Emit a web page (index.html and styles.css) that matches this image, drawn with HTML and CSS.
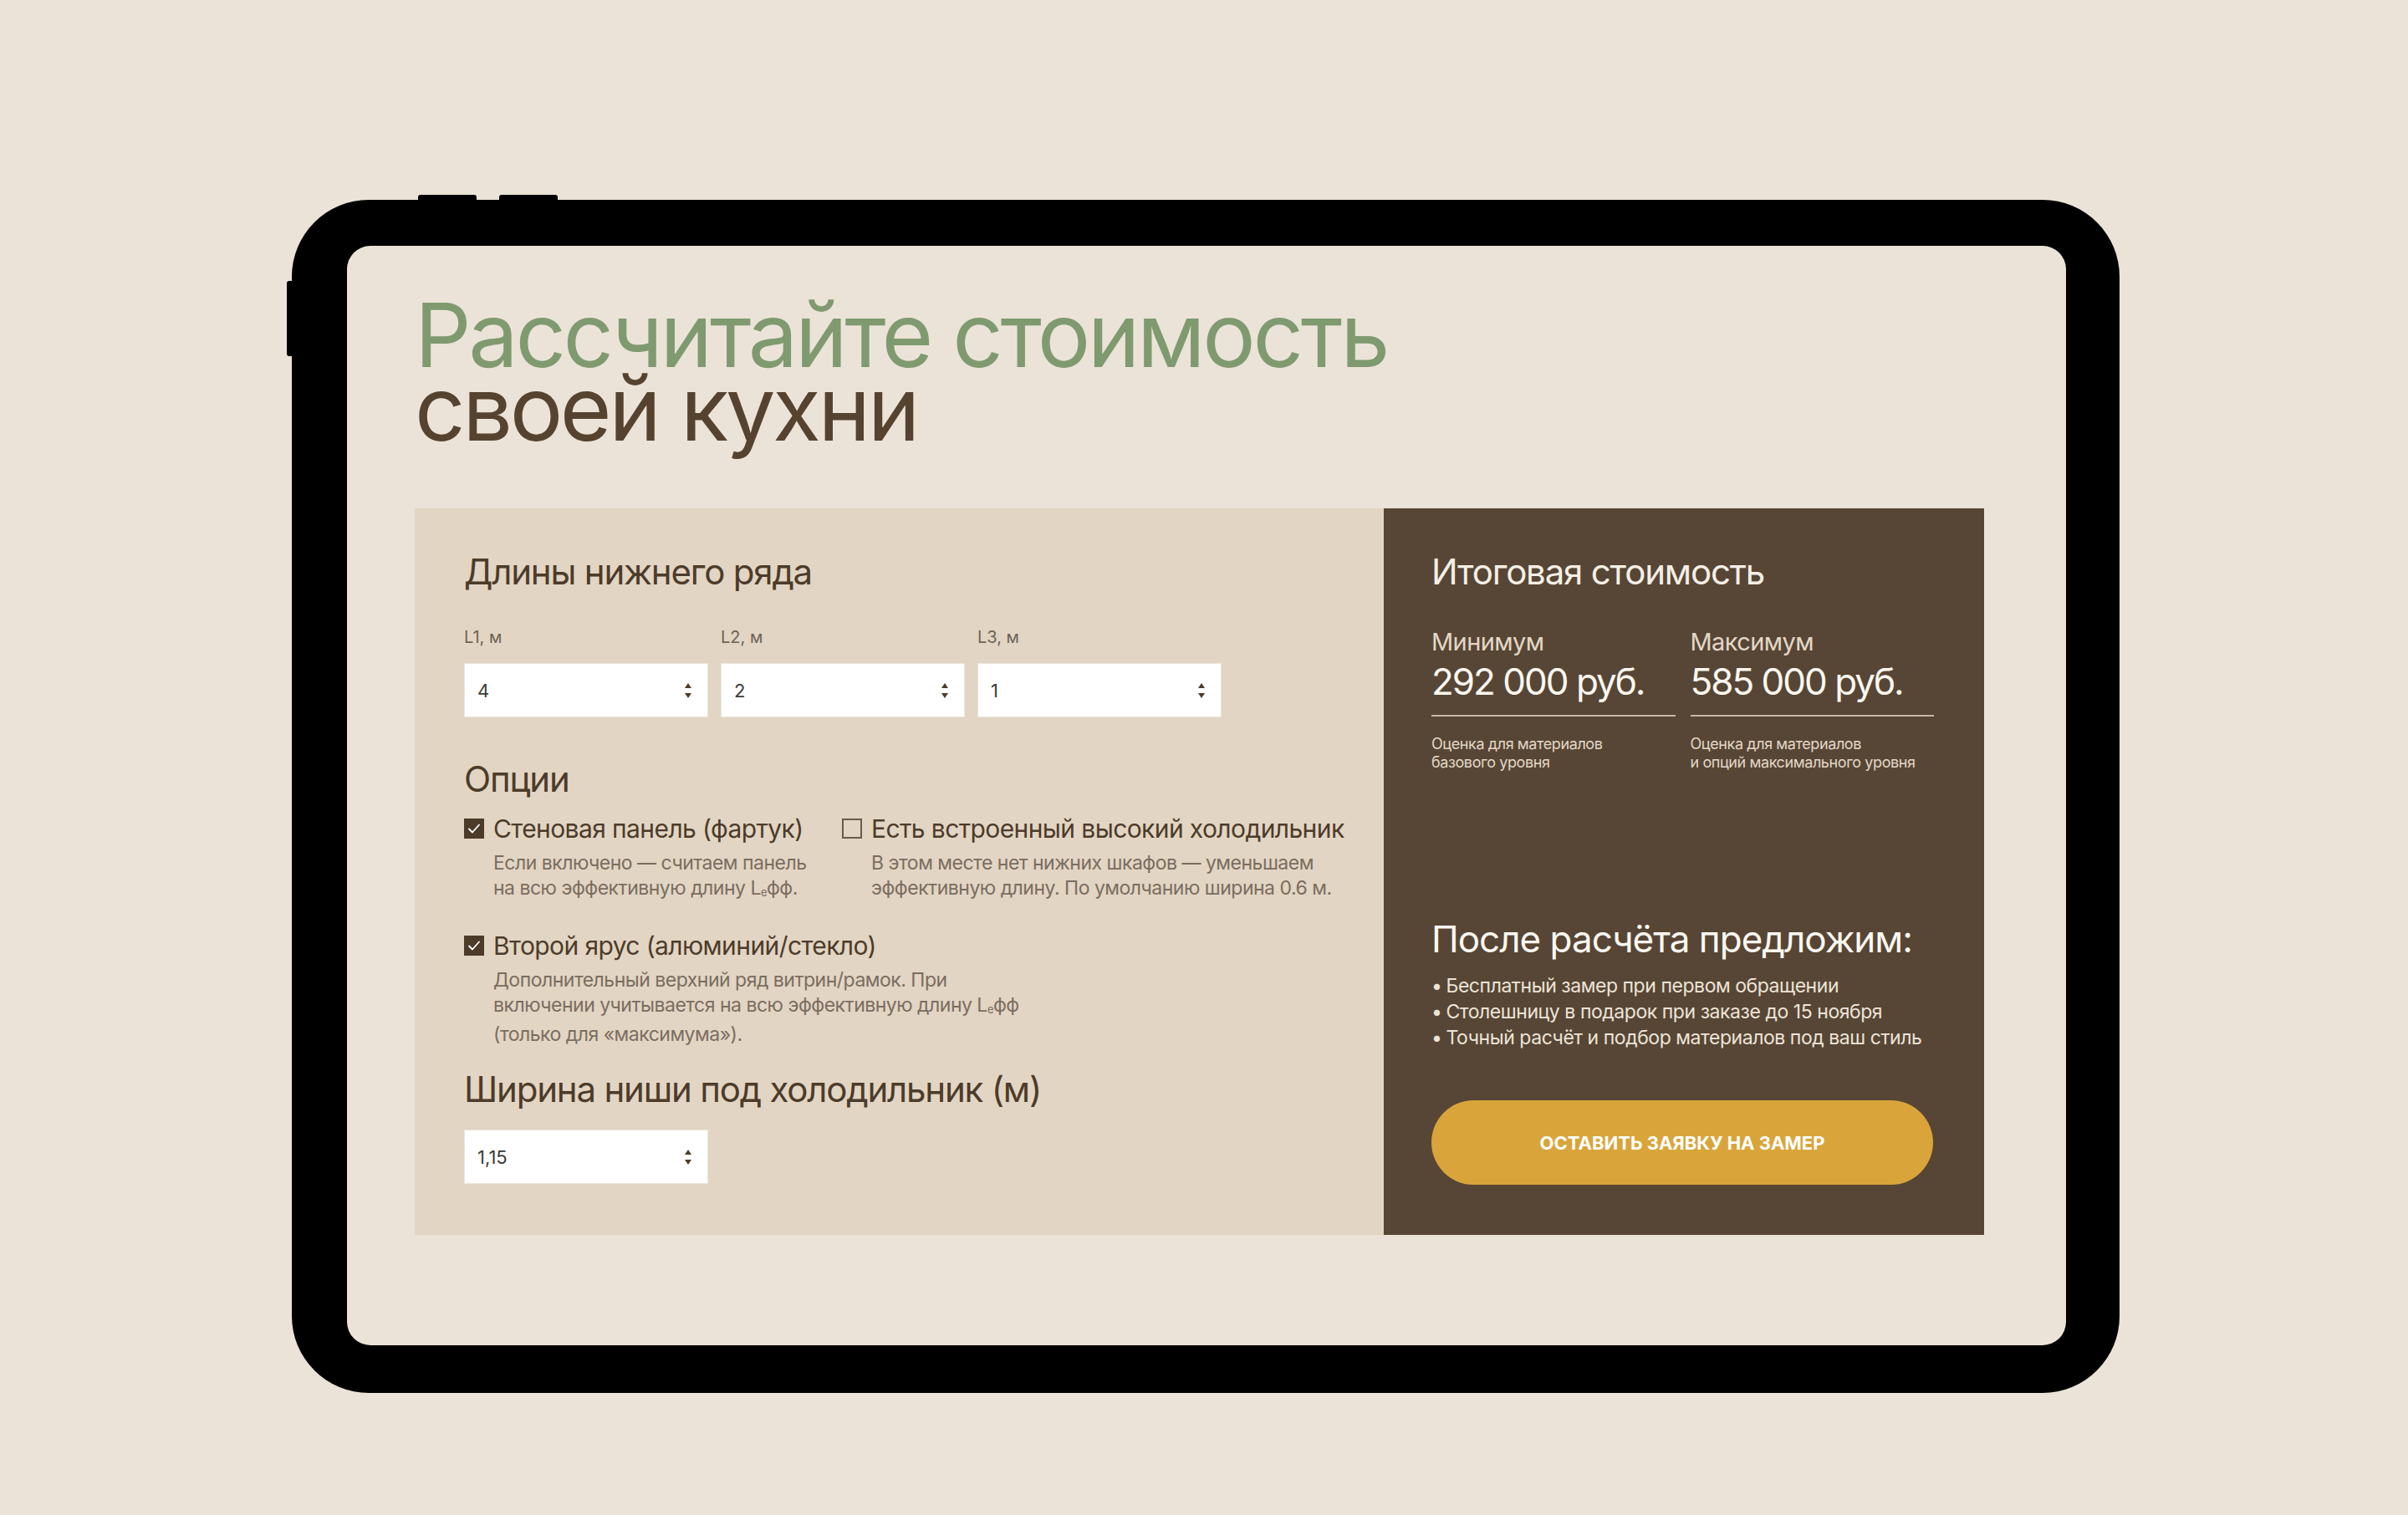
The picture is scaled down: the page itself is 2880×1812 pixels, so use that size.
FILE: index.html
```html
<!DOCTYPE html>
<html lang="ru">
<head>
<meta charset="utf-8">
<title>Калькулятор кухни</title>
<link rel="stylesheet" href="styles.css">
</head>
<body>
<div class="stage">
  <div class="tablet">
    <span class="btn-top btn-top-1"></span>
    <span class="btn-top btn-top-2"></span>
    <span class="btn-side"></span>
    <div class="screen">
      <h1 class="title"><span class="title-green">Рассчитайте стоимость</span><br><span class="title-brown">своей кухни</span></h1>
      <div class="calc">
        <div class="calc-left">
          <h2 class="sec-title">Длины нижнего ряда</h2>
          <div class="lengths">
            <div class="field">
              <div class="field-label">L1, м</div>
              <div class="num-input"><span class="num-val">4</span><svg class="spin" viewBox="0 0 8 18" width="8" height="18"><path d="M4 0 L8 6 L0 6 Z"/><path d="M0 12 L8 12 L4 18 Z"/></svg></div>
            </div>
            <div class="field">
              <div class="field-label">L2, м</div>
              <div class="num-input"><span class="num-val">2</span><svg class="spin" viewBox="0 0 8 18" width="8" height="18"><path d="M4 0 L8 6 L0 6 Z"/><path d="M0 12 L8 12 L4 18 Z"/></svg></div>
            </div>
            <div class="field">
              <div class="field-label">L3, м</div>
              <div class="num-input"><span class="num-val">1</span><svg class="spin" viewBox="0 0 8 18" width="8" height="18"><path d="M4 0 L8 6 L0 6 Z"/><path d="M0 12 L8 12 L4 18 Z"/></svg></div>
            </div>
          </div>

          <h2 class="sec-title sec-options">Опции</h2>
          <div class="options-row">
            <div class="option opt-1">
              <div class="opt-head"><span class="cb cb-on"><svg viewBox="0 0 24 24" width="24" height="24"><path d="M6 12.5 L10 16.5 L18 7.5" fill="none" stroke="#fff" stroke-width="1.8" stroke-linecap="round" stroke-linejoin="round"/></svg></span><span class="opt-label">Стеновая панель (фартук)</span></div>
              <p class="opt-desc">Если включено — считаем панель<br>на всю эффективную длину L<sub>е</sub>фф.</p>
            </div>
            <div class="option opt-2">
              <div class="opt-head"><span class="cb cb-off"></span><span class="opt-label">Есть встроенный высокий холодильник</span></div>
              <p class="opt-desc">В этом месте нет нижних шкафов — уменьшаем<br>эффективную длину. По умолчанию ширина 0.6 м.</p>
            </div>
          </div>
          <div class="option opt-3">
            <div class="opt-head"><span class="cb cb-on"><svg viewBox="0 0 24 24" width="24" height="24"><path d="M6 12.5 L10 16.5 L18 7.5" fill="none" stroke="#fff" stroke-width="1.8" stroke-linecap="round" stroke-linejoin="round"/></svg></span><span class="opt-label">Второй ярус (алюминий/стекло)</span></div>
            <p class="opt-desc">Дополнительный верхний ряд витрин/рамок. При<br>включении учитывается на всю эффективную длину L<sub>е</sub>фф<br>(только для «максимума»).</p>
          </div>

          <h2 class="sec-title sec-niche">Ширина ниши под холодильник (м)</h2>
          <div class="num-input niche-input"><span class="num-val">1,15</span><svg class="spin" viewBox="0 0 8 18" width="8" height="18"><path d="M4 0 L8 6 L0 6 Z"/><path d="M0 12 L8 12 L4 18 Z"/></svg></div>
        </div>

        <div class="calc-right">
          <h2 class="sec-title light">Итоговая стоимость</h2>
          <div class="prices">
            <div class="price-col">
              <div class="price-label">Минимум</div>
              <div class="price-val">292 000 руб.</div>
              <div class="price-note">Оценка для материалов<br>базового уровня</div>
            </div>
            <div class="price-col">
              <div class="price-label">Максимум</div>
              <div class="price-val">585 000 руб.</div>
              <div class="price-note">Оценка для материалов<br>и опций максимального уровня</div>
            </div>
          </div>
          <h3 class="offer-title">После расчёта предложим:</h3>
          <ul class="offer-list">
            <li>Бесплатный замер при первом обращении</li>
            <li>Столешницу в подарок при заказе до 15 ноября</li>
            <li>Точный расчёт и подбор материалов под ваш стиль</li>
          </ul>
          <button class="cta" type="button">ОСТАВИТЬ ЗАЯВКУ НА ЗАМЕР</button>
        </div>
      </div>
    </div>
  </div>
</div>
</body>
</html>
```

FILE: styles.css
```css
* { box-sizing: border-box; }
html, body { margin: 0; padding: 0; }
body {
  background: #ebe3d8;
  font-family: Inter, "Noto Sans", "DejaVu Sans", sans-serif;
  width: 2880px;
  height: 1812px;
  overflow: hidden;
}
.stage {
  padding: 239px 0 0 349px;
}
.tablet {
  position: relative;
  width: 2186px;
  height: 1427px;
  background: #000;
  border-radius: 92px;
  padding: 55px 64px 57px 66px;
}
.btn-top {
  position: absolute;
  top: -6px;
  height: 12px;
  width: 70px;
  background: #000;
  border-radius: 3px;
}
.btn-top-1 { left: 151px; }
.btn-top-2 { left: 248px; }
.btn-side {
  position: absolute;
  left: -6px;
  top: 97px;
  width: 12px;
  height: 90px;
  background: #000;
  border-radius: 3px;
}
.screen {
  width: 100%;
  height: 100%;
  background: #ebe3d8;
  border-radius: 28px;
  padding: 63px 98px 0 81px;
}
.title {
  margin: 0;
  font-weight: 400;
  font-size: 106px;
  line-height: 88px;
  letter-spacing: -3.4px;
}
.title-green { color: #7f9a6f; }
.title-brown { color: #56432f; }

.calc {
  margin-top: 75px;
  display: flex;
  height: 869px;
}
.calc-left {
  width: 1159px;
  background: #e2d5c3;
  padding: 50px 0 0 59px;
  color: #4d3b2a;
}
.calc-right {
  width: 718px;
  background: #574635;
  padding: 50px 60px 0 57px;
  color: #f3ece2;
}
.sec-title {
  margin: 0;
  font-weight: 400;
  font-size: 42px;
  line-height: 52px;
  letter-spacing: -1.2px;
  color: #4d3b2a;
  white-space: nowrap;
}
.sec-title.light { color: #f5efe6; }

.lengths {
  display: flex;
  gap: 15px;
  margin-top: 40px;
}
.field { width: 292px; }
.field-label {
  font-size: 20px;
  line-height: 24px;
  color: #6e6255;
  margin-bottom: 19px;
}
.num-input {
  height: 65px;
  background: #fff;
  display: flex;
  align-items: center;
  justify-content: space-between;
  padding: 0 19px 0 15px;
  border: 1px solid #ece6dc;
}
.num-val {
  font-size: 22px;
  color: #3b3b3b;
}
.spin { fill: #4d3b2a; }

.sec-options { margin-top: 48px; }
.options-row {
  display: flex;
  margin-top: 15px;
}
.opt-1 { width: 452px; }
.opt-head {
  display: flex;
  align-items: center;
  gap: 11px;
}
.cb {
  width: 24px;
  height: 24px;
  flex: none;
  display: block;
}
.cb-on { background: #4d3b2a; }
.cb-on svg { display: block; }
.cb-off {
  border: 2px solid #6b5a48;
  background: transparent;
}
.opt-label {
  font-size: 30px;
  line-height: 36px;
  color: #4d3b2a;
  letter-spacing: -0.6px;
  white-space: nowrap;
}
.opt-desc {
  margin: 8px 0 0 35px;
  font-size: 23px;
  line-height: 30px;
  color: #7a6d60;
  letter-spacing: -0.5px;
  white-space: nowrap;
}
.opt-desc sub {
  font-size: 13px;
  vertical-align: -2px;
}
.opt-3 { margin-top: 31px; }
.opt-3 .opt-desc { margin-top: 8px; }

.sec-niche { margin-top: 25px; }
.niche-input {
  width: 292px;
  margin-top: 22px;
}

.prices {
  display: flex;
  gap: 18px;
  margin-top: 40px;
}
.price-col { width: 292px; }
.price-label {
  font-size: 29px;
  line-height: 36px;
  color: #e3d7c7;
  letter-spacing: -0.6px;
}
.price-val {
  margin-top: 2px;
  font-size: 44px;
  line-height: 54px;
  color: #fbf7f1;
  letter-spacing: -2px;
  padding-bottom: 13px;
  border-bottom: 2px solid #c8b8a3;
  white-space: nowrap;
}
.price-note {
  margin-top: 22px;
  font-size: 18px;
  line-height: 22px;
  color: #e3d7c7;
  letter-spacing: -0.4px;
  white-space: nowrap;
}
.offer-title {
  margin: 174px 0 0 0;
  font-weight: 400;
  font-size: 44px;
  line-height: 52px;
  color: #fbf7f1;
  letter-spacing: -1px;
  white-space: nowrap;
}
.offer-list {
  list-style: none;
  margin: 15px 0 0 0;
  padding: 0;
  font-size: 23px;
  line-height: 31px;
  color: #ede4d8;
  letter-spacing: -0.45px;
  white-space: nowrap;
}
.offer-list li::before {
  content: "•";
  margin-right: 5px;
}
.cta {
  display: block;
  margin-top: 59px;
  width: 600px;
  height: 101px;
  border: none;
  border-radius: 51px;
  background: #d9a53b;
  color: #fff;
  font-family: Inter, "Noto Sans", sans-serif;
  font-weight: 700;
  font-size: 22px;
  letter-spacing: 0;
}
```
